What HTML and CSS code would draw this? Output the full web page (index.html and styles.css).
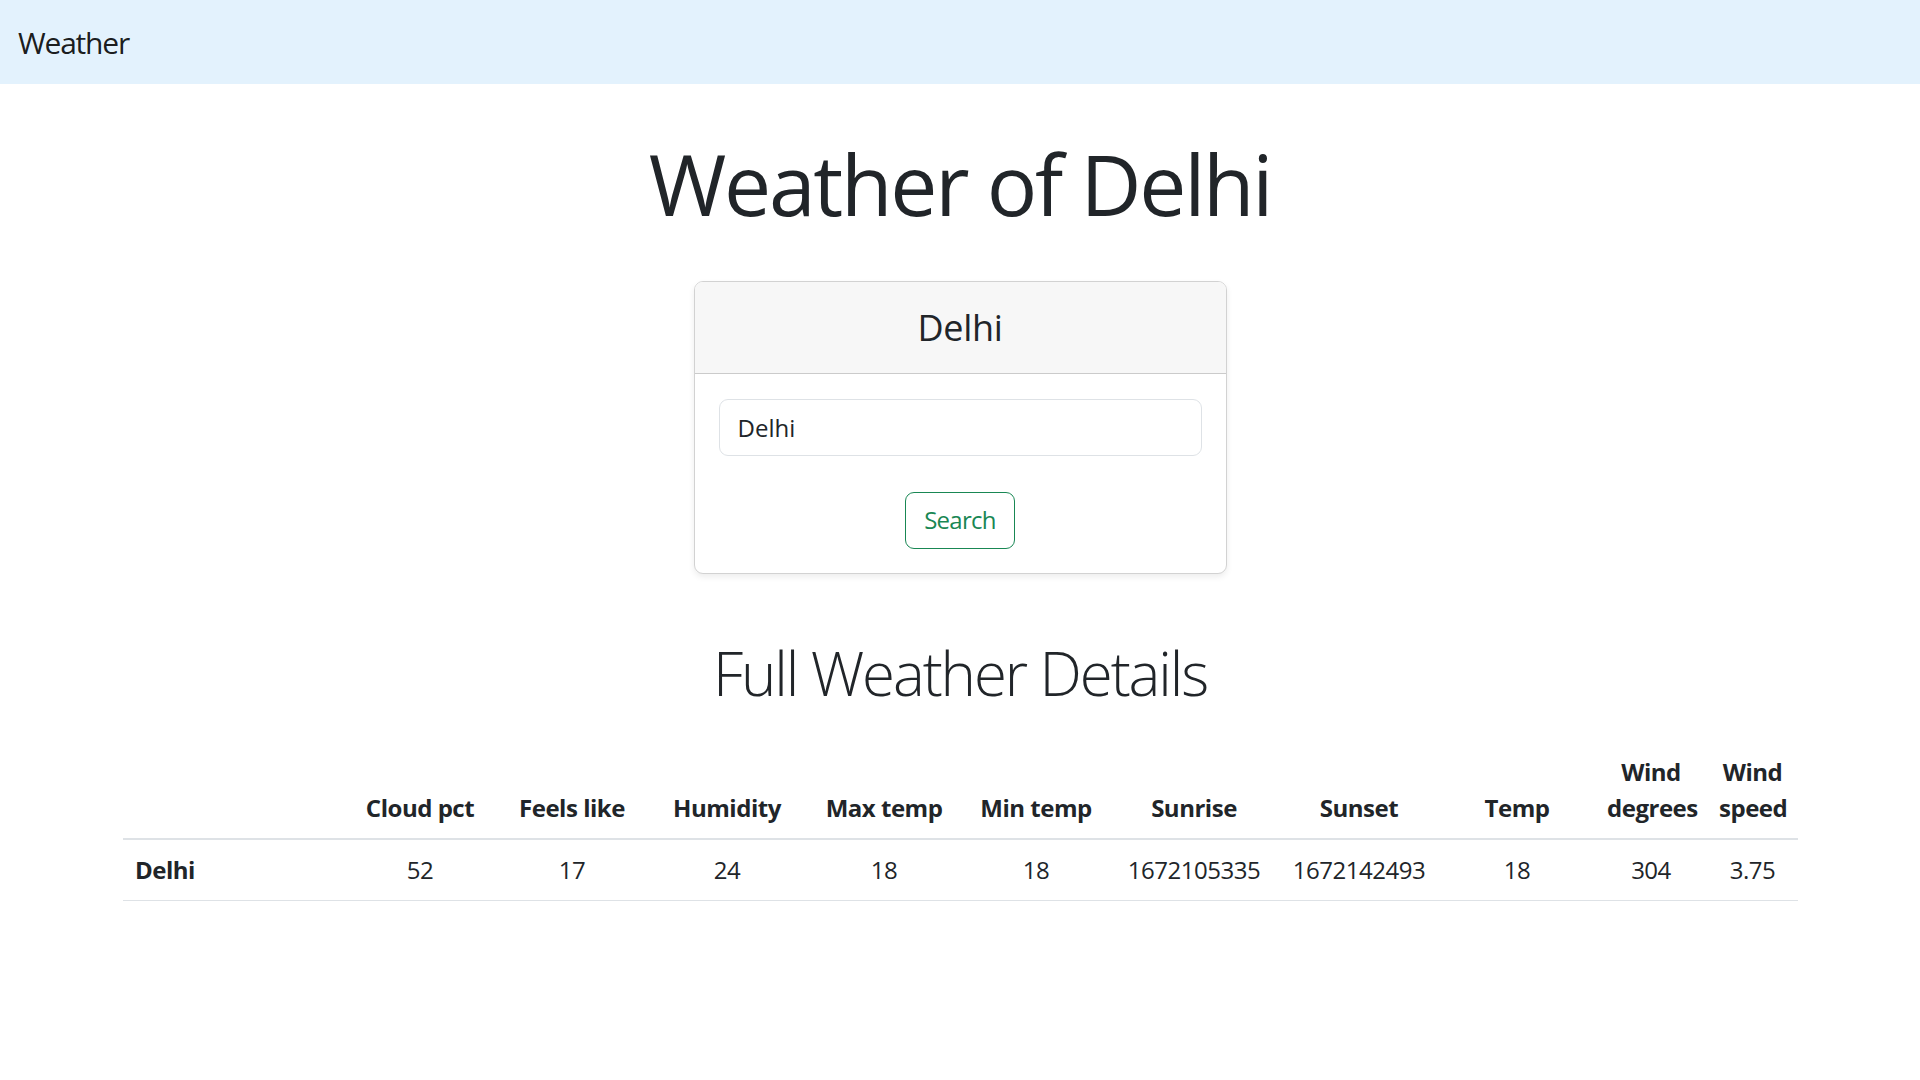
FILE: index.html
```html
<!DOCTYPE html>
<html lang="en">
<head>
<meta charset="utf-8">
<title>Weather</title>
<link rel="stylesheet" href="styles.css">
</head>
<body>
<nav class="navbar">
  <a class="brand" href="#">Weather</a>
</nav>
<main class="container">
  <h1 class="title">Weather of Delhi</h1>
  <div class="card">
    <div class="card-header">
      <h4 class="card-title">Delhi</h4>
    </div>
    <div class="card-body">
      <form class="search-form">
        <input class="form-control" type="text" value="Delhi">
        <button class="btn-outline" type="button">Search</button>
      </form>
    </div>
  </div>
  <h2 class="subtitle">Full Weather Details</h2>
  <table class="table">
    <colgroup>
      <col class="c-name"><col class="c-cloud"><col class="c-feels"><col class="c-hum"><col class="c-max"><col class="c-min"><col class="c-rise"><col class="c-set"><col class="c-temp"><col class="c-wdeg"><col class="c-wspd">
    </colgroup>
    <thead>
      <tr>
        <th></th>
        <th>Cloud pct</th>
        <th>Feels like</th>
        <th>Humidity</th>
        <th>Max temp</th>
        <th>Min temp</th>
        <th>Sunrise</th>
        <th>Sunset</th>
        <th>Temp</th>
        <th>Wind degrees</th>
        <th>Wind speed</th>
      </tr>
    </thead>
    <tbody>
      <tr>
        <th class="row-head">Delhi</th>
        <td>52</td>
        <td>17</td>
        <td>24</td>
        <td>18</td>
        <td>18</td>
        <td>1672105335</td>
        <td>1672142493</td>
        <td>18</td>
        <td>304</td>
        <td>3.75</td>
      </tr>
    </tbody>
  </table>
</main>
</body>
</html>
```

FILE: styles.css
```css
* { box-sizing: border-box; }

body {
  margin: 0;
  font-family: "Open Sans", "Noto Sans", sans-serif;
  font-size: 24px;
  line-height: 1.5;
  color: #212529;
  background: #fff;
}

.navbar {
  background: #e3f2fd;
  height: 84px;
  padding: 12px 18px;
  display: flex;
  align-items: center;
}

.brand {
  font-size: 30px;
  line-height: 45px;
  padding: 7.5px 0;
  color: rgba(0, 0, 0, 0.9);
  text-decoration: none;
  letter-spacing: -0.04em;
}

.container {
  width: 1710px;
  margin: 0 auto;
  padding: 0 18px;
}

.title {
  margin: 50px 0 46px;
  font-size: 84px;
  font-weight: 400;
  line-height: 1.2;
  text-align: center;
  letter-spacing: -0.027em;
}

.card {
  width: 533px;
  margin: 0 auto;
  border: 1px solid rgba(0, 0, 0, 0.175);
  border-radius: 9px;
  box-shadow: 0 3px 6px rgba(0, 0, 0, 0.075);
  overflow: hidden;
}

.card-header {
  background: #f7f7f7;
  border-bottom: 1px solid rgba(0, 0, 0, 0.175);
  padding: 24px;
  text-align: center;
}

.card-title {
  margin: 0;
  font-size: 36px;
  font-weight: 400;
  line-height: 1.2;
  letter-spacing: -0.01em;
}

.card-body {
  padding: 25px 24px 24px;
}

.search-form {
  display: flex;
  flex-direction: column;
  align-items: center;
  gap: 36px;
}

.form-control {
  width: 100%;
  height: 57px;
  padding: 9px 18px;
  font: inherit;
  color: #212529;
  border: 1px solid #dee2e6;
  border-radius: 9px;
  background: #fff;
}

.btn-outline {
  height: 57px;
  padding: 9px 18px;
  font: inherit;
  letter-spacing: -0.03em;
  color: #198754;
  background: #fff;
  border: 1px solid #198754;
  border-radius: 9px;
}

.subtitle {
  margin: 63px 0 33px;
  font-size: 60px;
  font-weight: 300;
  line-height: 1.2;
  text-align: center;
  letter-spacing: -0.035em;
}

.table {
  width: 100%;
  table-layout: fixed;
  border-collapse: collapse;
}

.c-name { width: 222px; }
.c-cloud { width: 150px; }
.c-feels { width: 154px; }
.c-hum { width: 156px; }
.c-max { width: 158px; }
.c-min { width: 146px; }
.c-rise { width: 170px; }
.c-set { width: 160px; }
.c-temp { width: 156px; }
.c-wdeg { width: 112px; }
.c-wspd { width: 91px; }

.table th,
.table td {
  padding: 12px;
  text-align: center;
  line-height: 36px;
  letter-spacing: -0.02em;
}

.table thead th {
  font-weight: 700;
  vertical-align: bottom;
  border-bottom: 2px solid #dee2e6;
}

.table tbody th,
.table tbody td {
  border-bottom: 1px solid #dee2e6;
}

.table .row-head {
  text-align: left;
  font-weight: 700;
}
```
